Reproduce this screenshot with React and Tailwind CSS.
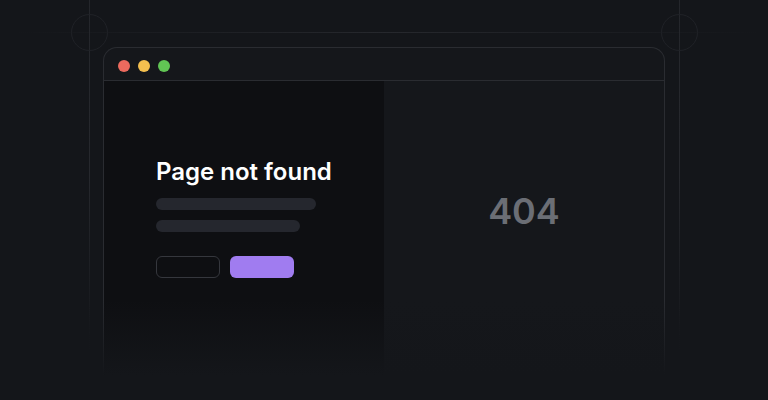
export default function App() {
  return (
    <div
      className="relative w-[768px] h-[400px] overflow-hidden bg-[#14161a]"
      style={{ fontFamily: "Inter, 'Noto Sans', sans-serif" }}
    >
      {/* guide lines */}
      <div className="absolute left-[16px] right-[8px] top-[32px] h-px bg-gradient-to-r from-transparent via-[#26282d] to-transparent" />
      <div className="absolute left-[89px] top-0 w-px h-[350px] bg-gradient-to-b from-[#24262b] via-[#26282d] to-transparent" />
      <div className="absolute left-[679px] top-0 w-px h-[350px] bg-gradient-to-b from-[#24262b] via-[#26282d] to-transparent" />
      <div className="absolute left-[71px] top-[14px] w-[37px] h-[37px] rounded-full border border-[#202227]" />
      <div className="absolute left-[661px] top-[14px] w-[37px] h-[37px] rounded-full border border-[#202227]" />

      <div className="relative pt-[47px] pl-[103px] pr-[103px]">
        <div className="h-[400px] rounded-t-[14px] border border-b-0 border-[#2a2c31] bg-[#15171b] flex flex-col">
          <div className="h-[33px] flex items-center gap-2 pl-[14px] pt-[4px] border-b border-[#2a2c31] shrink-0">
            <div className="w-3 h-3 rounded-full bg-[#ec6a5e]" />
            <div className="w-3 h-3 rounded-full bg-[#f4bf4f]" />
            <div className="w-3 h-3 rounded-full bg-[#61c554]" />
          </div>
          <div className="flex flex-1">
            <div className="w-[280px] bg-[#0e0f12] pl-[52px] pt-[75px]">
              <div className="text-[24px] leading-8 font-semibold text-white">
                Page not found
              </div>
              <div className="mt-[10px] h-3 w-[160px] rounded-full bg-[#25272e]" />
              <div className="mt-[10px] h-3 w-[144px] rounded-full bg-[#25272e]" />
              <div className="mt-6 flex gap-[10px]">
                <div className="w-[64px] h-[22px] rounded-md border border-[#35373d]" />
                <div className="w-[64px] h-[22px] rounded-md bg-[#a07cf0]" />
              </div>
            </div>
            <div className="flex-1 flex justify-center pt-[110px]">
              <div className="text-[36px] leading-10 font-semibold text-[#6b6e75]">404</div>
            </div>
          </div>
        </div>
      </div>

      {/* bottom fade */}
      <div className="absolute left-0 right-0 bottom-0 h-[100px] bg-[linear-gradient(to_bottom,transparent,#14161a_75%)]" />
    </div>
  );
}
